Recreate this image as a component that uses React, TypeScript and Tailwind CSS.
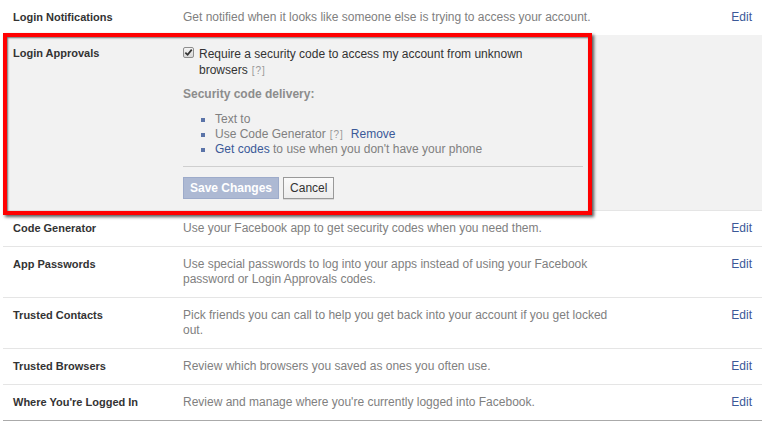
import { Fragment } from "react";

const font = { fontFamily: '"Liberation Sans", Arial, sans-serif' };

type Row = { label: string; desc: string };

const before: Row[] = [
  { label: "Login Notifications", desc: "Get notified when it looks like someone else is trying to access your account." },
];

const after: Row[] = [
  { label: "Code Generator", desc: "Use your Facebook app to get security codes when you need them." },
  { label: "App Passwords", desc: "Use special passwords to log into your apps instead of using your Facebook password or Login Approvals codes." },
  { label: "Trusted Contacts", desc: "Pick friends you can call to help you get back into your account if you get locked out." },
  { label: "Trusted Browsers", desc: "Review which browsers you saved as ones you often use." },
  { label: "Where You're Logged In", desc: "Review and manage where you're currently logged into Facebook." },
];

function SettingRow({ row, first }: { row: Row; first?: boolean }) {
  return (
    <div className={`flex px-[10px] py-[10px] ${first ? "" : "border-t border-[#e5e5e5]"}`}>
      <div className="w-[170px] shrink-0 text-[11px] font-bold leading-[15px] text-[#333]">{row.label}</div>
      <div className="w-[430px] text-[12px] leading-[15px] text-[#808080]">{row.desc}</div>
      <div className="ml-auto text-[12px] leading-[15px] text-[#3b5998]">Edit</div>
    </div>
  );
}

function Help() {
  return <span className="ml-[4px] text-[10px] tracking-[1px] text-[#999]">[?]</span>;
}

function Bullet({ children }: { children: React.ReactNode }) {
  return (
    <li className="flex items-center">
      <span className="ml-[18px] mr-[10px] h-[4px] w-[4px] bg-[#5b74a8]" />
      <span>{children}</span>
    </li>
  );
}

export default function App() {
  return (
    <div className="relative h-[421px] w-[775px] overflow-hidden bg-white pl-[3px]" style={font}>
      <div className="w-[759px] border-b border-[#aaa]">
        {before.map((r) => (
          <SettingRow key={r.label} row={r} first />
        ))}

        {/* Login Approvals, open for editing */}
        <div className="flex bg-[#f2f2f2] px-[10px] pt-[11px] pb-[11px]">
          <div className="w-[170px] shrink-0 text-[11px] font-bold leading-[15px] text-[#333]">Login Approvals</div>
          <div className="w-[400px]">
            <div className="flex">
              <span className="mt-[1px] flex h-[11px] w-[11px] shrink-0 items-center justify-center rounded-[2px] border border-[#8e8e8e] bg-gradient-to-b from-[#f4f4f4] to-[#d8d8d8]">
                <svg viewBox="0 0 10 10" className="h-[9px] w-[9px]">
                  <path d="M1.5 5.2 L4 7.6 L8.6 1.8" fill="none" stroke="#333" strokeWidth="1.9" />
                </svg>
              </span>
              <div className="ml-[5px] text-[12px] leading-[16px] text-[#333]">
                Require a security code to access my account from unknown
                <br />
                browsers
                <Help />
              </div>
            </div>
            <div className="mt-[8px] text-[12px] font-bold leading-[15px] text-[#8c8c8c]">Security code delivery:</div>
            <ul className="mt-[10px] text-[12px] leading-[15px] text-[#808080]">
              <Bullet>Text to</Bullet>
              <Bullet>
                Use Code Generator
                <Help />
                <span className="ml-[7px] text-[#3b5998]">Remove</span>
              </Bullet>
              <Bullet>
                <span className="text-[#3b5998]">Get codes</span> to use when you don't have your phone
              </Bullet>
            </ul>
            <div className="mt-[9px] border-t border-[#cfcfcf]" />
            <div className="mt-[10px] flex gap-[4px]">
              <button className="h-[22px] border border-[#9dabca] bg-[#adb9d3] px-[6px] text-[12px] font-bold text-white">
                Save Changes
              </button>
              <button className="h-[22px] border border-[#999] bg-gradient-to-b from-[#fafafa] to-[#ececec] px-[6px] text-[12px] text-[#333] shadow-[0_1px_0_rgba(0,0,0,0.1)]">
                Cancel
              </button>
            </div>
          </div>
        </div>

        {after.map((r) => (
          <Fragment key={r.label}>
            <SettingRow row={r} />
          </Fragment>
        ))}
      </div>

      {/* red highlight annotation */}
      <div className="pointer-events-none absolute left-[3px] top-[33px] h-[182px] w-[589px] border-[4px] border-[#ff0000] shadow-[2px_2px_3px_rgba(0,0,0,0.65),inset_1px_1px_2px_rgba(0,0,0,0.55)]" />
    </div>
  );
}
